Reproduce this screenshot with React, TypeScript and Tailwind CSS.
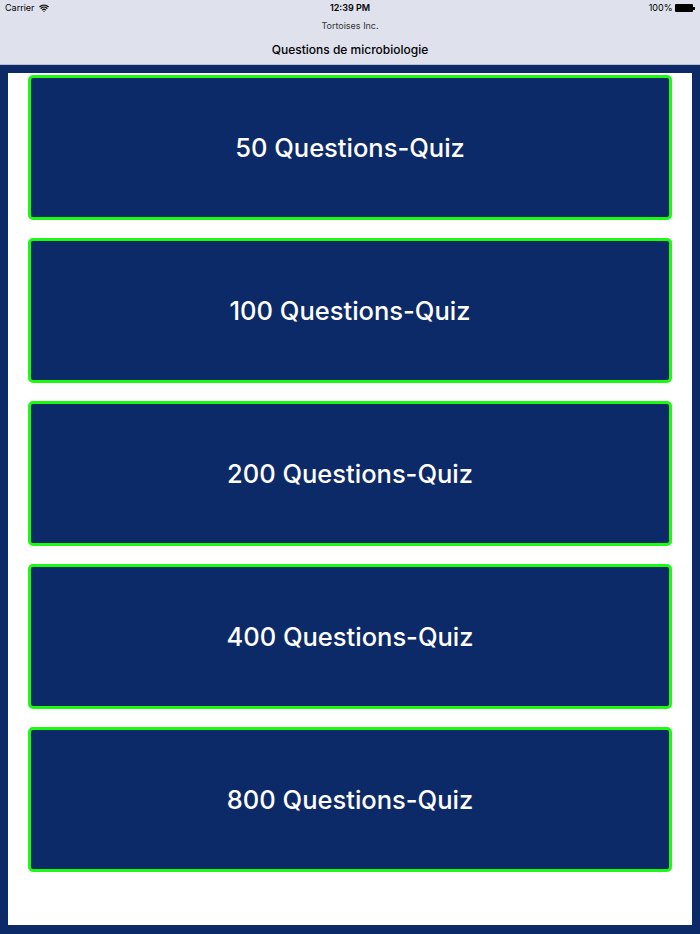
import { Wifi } from "lucide-react";

const quizzes = [50, 100, 200, 400, 800];

export default function App() {
  return (
    <div className="w-[700px] h-[934px] flex flex-col bg-[#0d2a68] font-['Inter','Roboto',sans-serif] overflow-hidden">
      {/* ── Status + nav bar ───────────────── */}
      <div className="h-[65px] shrink-0 bg-[#dfe2ec] border-b border-[#b9bfcc] flex flex-col">
        <div className="h-[16px] px-[5px] flex items-center justify-between text-[9px] text-black">
          <div className="flex items-center gap-1 w-[100px]">
            <span>Carrier</span>
            <Wifi className="w-[10px] h-[10px]" strokeWidth={3} />
          </div>
          <span className="font-semibold">12:39 PM</span>
          <div className="flex items-center gap-[3px] w-[100px] justify-end">
            <span>100%</span>
            <div className="flex items-center">
              <div className="w-[18px] h-[8px] bg-black rounded-[1px]" />
              <div className="w-[1.5px] h-[3px] bg-black" />
            </div>
          </div>
        </div>
        <div className="h-[20px] flex items-center justify-center text-[9px] text-[#333]">Tortoises Inc.</div>
        <div className="flex-1 flex items-center justify-center text-[12px] font-medium text-black pt-[1px] pb-[2px]">
          Questions de microbiologie
        </div>
      </div>

      {/* ── Quiz list ──────────────────────── */}
      <div className="flex-1 px-[8px] pt-[8px] pb-[9px] flex">
        <div className="flex-1 bg-white px-[20px] pt-[2px] flex flex-col gap-[18px]">
          {quizzes.map((n) => (
            <button
              key={n}
              className="h-[145px] w-full bg-[#0d2a68] border-[3px] border-[#1dfa12] rounded-[5px] flex items-center justify-center text-white text-[25.5px] font-medium pt-[2px]"
            >
              {n} Questions-Quiz
            </button>
          ))}
        </div>
      </div>
    </div>
  );
}
